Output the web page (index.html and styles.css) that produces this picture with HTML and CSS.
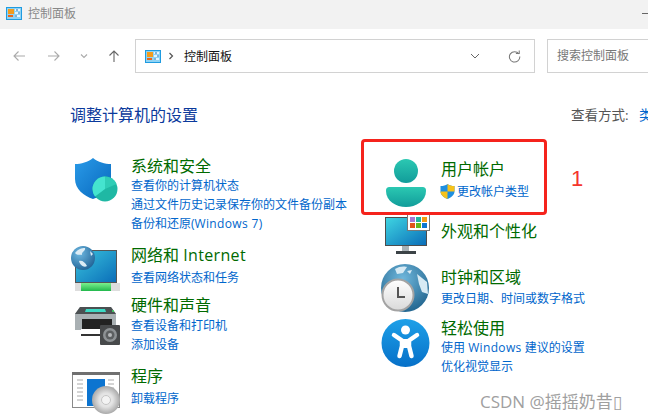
FILE: index.html
```html
<!DOCTYPE html>
<html lang="zh-CN">
<head>
  <meta charset="UTF-8">
  <title>控制面板</title>
  <link rel="stylesheet" href="styles.css">
</head>
<body>
  <div class="titlebar">
    <svg class="cp-icon" viewBox="0 0 16 13"><rect x=".5" y=".5" width="15" height="12" fill="#8fd3f4" stroke="#1f9be0"/><rect x="2" y="2" width="6" height="5" fill="#f29b1d"/><rect x="2" y="8" width="5" height="2" fill="#e8661a"/><path d="M9 3h5M9 6h5M9 9h5" stroke="#fff" stroke-width="1.4"/><path d="M11 2v2M13 5v2M10 8v2" stroke="#1c6fb5"/></svg>
    <span class="titlebar-text">控制面板</span>
    <span class="minimize"></span>
  </div>

  <div class="nav">
    <svg class="nav-btn back" viewBox="0 0 12 12"><path d="M12 6H1M5.500 1.500 1 6l4.500 4.500" fill="none" stroke="#aaa" stroke-width="1.100"/></svg>
    <svg class="nav-btn forward" viewBox="0 0 12 12"><path d="M0 6h11M6.500 1.500 11 6l-4.500 4.500" fill="none" stroke="#aaa" stroke-width="1.100"/></svg>
    <svg class="nav-btn down" viewBox="0 0 12 12"><path d="M3 4.500 6 7.500 9 4.500" fill="none" stroke="#aaa" stroke-width="1.100"/></svg>
    <svg class="nav-btn up" viewBox="0 0 12 12"><path d="M6 12V1M1.500 5.500 6 1l4.500 4.500" fill="none" stroke="#666" stroke-width="1.100"/></svg>
    <div class="address">
      <svg class="cp-icon" viewBox="0 0 16 13"><rect x=".5" y=".5" width="15" height="12" fill="#8fd3f4" stroke="#1f9be0"/><rect x="2" y="2" width="6" height="5" fill="#f29b1d"/><rect x="2" y="8" width="5" height="2" fill="#e8661a"/><path d="M9 3h5M9 6h5M9 9h5" stroke="#fff" stroke-width="1.4"/><path d="M11 2v2M13 5v2M10 8v2" stroke="#1c6fb5"/></svg>
      <svg class="crumb-arrow" viewBox="0 0 6 8"><path d="M1.500 1 4.500 4l-3 3" fill="none" stroke="#555" stroke-width="1.200"/></svg>
      <span class="crumb">控制面板</span>
      <svg class="addr-down" viewBox="0 0 10 6"><path d="M1 1l4 4 4-4" fill="none" stroke="#666"/></svg>
      <svg class="refresh" viewBox="0 0 14 14"><path d="M11.700 4.200A5.600 5.600 0 1 0 12.700 7" fill="none" stroke="#777" stroke-width="1.100"/><path d="M8.500 3.800h3.600V.5" fill="none" stroke="#777" stroke-width="1.100"/></svg>
    </div>
    <div class="search">搜索控制面板</div>
  </div>

  <div class="heading-row">
    <h1>调整计算机的设置</h1>
    <div class="view-by">查看方式: <a class="view-value">类别</a></div>
  </div>

  <div class="columns">
    <div class="column">
      <div class="item">
        <svg class="icon" viewBox="0 0 48 48">
          <defs><linearGradient id="sh" x1="0" y1="0" x2="1" y2="1"><stop offset="0" stop-color="#2a9be8"/><stop offset="1" stop-color="#0767bd"/></linearGradient></defs>
          <path d="M4 8C10 8 17 6 22 2 27 6 34 8 40 8V23C40 33 31 40 22 43 13 40 4 33 4 23Z" fill="url(#sh)"/>
          <circle cx="34" cy="33" r="12.500" fill="#1fb8a4"/>
          <path d="M34 33V20.500A12.500 12.500 0 0 1 45.500 28Z" fill="#2fcdb6"/>
          <path d="M34 33V20.500A12.500 12.500 0 0 0 21.500 33 12.500 12.500 0 0 0 24 40.500Z" fill="#45e4cf"/>
        </svg>
        <div class="text">
          <a class="title">系统和安全</a>
          <a class="link">查看你的计算机状态</a>
          <a class="link">通过文件历史记录保存你的文件备份副本</a>
          <a class="link">备份和还原(<span class="en">Windows 7</span>)</a>
        </div>
      </div>

      <div class="item">
        <svg class="icon" viewBox="0 0 48 48">
          <defs>
            <linearGradient id="scr" x1="0" y1="0" x2="1" y2="1"><stop offset="0" stop-color="#3ac4dd"/><stop offset="1" stop-color="#0a6db8"/></linearGradient>
            <linearGradient id="grn" x1="0" y1="0" x2="0" y2="1"><stop offset="0" stop-color="#7bf08d"/><stop offset="1" stop-color="#22b84c"/></linearGradient>
            <radialGradient id="gl" cx=".35" cy=".3" r=".8"><stop offset="0" stop-color="#6fb9e2"/><stop offset="1" stop-color="#1d5f92"/></radialGradient>
          </defs>
          <rect x="4.500" y="5.500" width="41" height="32" fill="url(#scr)" stroke="#555"/>
          <rect x="4" y="38" width="45" height="8" fill="#ddd"/>
          <rect x="10" y="38" width="30" height="8" fill="url(#grn)"/>
          <circle cx="12" cy="13" r="12" fill="url(#gl)"/>
          <path d="M4 8C7 4 11 3 14 3 15 6 10 7 11 10 8 9 7 11 4 8ZM8 16C11 15 14 17 16 21 13 23 9 20 8 16ZM19 6 22 9 20 11Z" fill="#dcecf5"/>
        </svg>
        <div class="text">
          <a class="title title-gap">网络和 <span class="en">Internet</span></a>
          <a class="link">查看网络状态和任务</a>
        </div>
      </div>

      <div class="item item-tight">
        <svg class="icon icon-low" viewBox="0 0 48 48">
          <path d="M4 12 9 5H40L45 12V28H4Z" fill="#a9b0b3"/>
          <path d="M9 5H40L45 12H4Z" fill="#4b5052"/>
          <path d="M15 7H34L35 10H14Z" fill="#3ddac4"/>
          <circle cx="42" cy="9" r="1" fill="#3fe06a"/>
          <rect x="11" y="17" width="30" height="10" fill="#222"/>
          <rect x="10" y="27" width="24" height="5" fill="#fff"/>
          <rect x="10" y="32" width="20" height="2" fill="#333"/>
          <rect x="29" y="23" width="20" height="20" rx="1" fill="#47494b"/>
          <circle cx="39" cy="33" r="7" fill="#8e9295"/>
          <circle cx="39" cy="33" r="4.500" fill="#5c5f61"/>
          <circle cx="39" cy="33" r="2" fill="#b5b8ba"/>
        </svg>
        <div class="text text-hardware">
          <a class="title">硬件和声音</a>
          <a class="link">查看设备和打印机</a>
          <a class="link">添加设备</a>
        </div>
      </div>

      <div class="item">
        <svg class="icon" viewBox="0 -1 48 48">
          <defs><radialGradient id="disc"><stop offset="0" stop-color="#f2f2f2"/><stop offset=".5" stop-color="#e2e2e2"/><stop offset="1" stop-color="#a9a9a9"/></radialGradient></defs>
          <rect x="1.500" y="5.500" width="47" height="35" fill="#fff" stroke="#8a8a8a"/>
          <rect x="1" y="5" width="48" height="3" fill="#707070"/>
          <path d="M6 13h6M6 17h6M6 21h6M6 25h6M6 29h6M6 33h6M37 13h6M37 17h6M37 21h6" stroke="#aaa"/>
          <rect x="16" y="12" width="18" height="27" fill="#0c74d0"/>
          <circle cx="35" cy="33" r="14" fill="url(#disc)"/>
          <circle cx="35" cy="33" r="4.500" fill="#f3f3f3" stroke="#c5c5c5"/>
        </svg>
        <div class="text">
          <a class="title title-gap">程序</a>
          <a class="link">卸载程序</a>
        </div>
      </div>
    </div>

    <div class="column column-right">
      <div class="item">
        <svg class="icon" viewBox="0 0 48 48">
          <defs><linearGradient id="usr" x1="0" y1="0" x2="0" y2="1"><stop offset="0" stop-color="#2bc8b2"/><stop offset="1" stop-color="#119c9a"/></linearGradient></defs>
          <circle cx="25" cy="12" r="12" fill="url(#usr)"/>
          <path d="M5 32C5 29 6 28 9 28H41C44 28 45 29 45 32 45 42 35 48 25 48 15 48 5 42 5 32Z" fill="url(#usr)"/>
        </svg>
        <div class="text">
          <a class="title title-gap">用户帐户</a>
          <a class="link link-shield">
            <svg class="uac" viewBox="0 0 15 15"><path d="M7.500 0C9.500 1.500 11.500 2 14.500 2V7.500C14.500 11 11 13.500 7.500 15 4 13.500.5 11 .5 7.500V2C3.500 2 5.500 1.500 7.500 0Z" fill="#1f8fe0"/><path d="M7.500 0C9.500 1.500 11.500 2 14.500 2V7.500H7.500ZM7.500 7.500V15C4 13.500.5 11 .5 7.500Z" fill="#f7c21a"/></svg>更改帐户类型</a>
        </div>
      </div>

      <div class="item item-appearance">
        <svg class="icon" viewBox="0 0 48 48">
          <defs><linearGradient id="mon" x1="0" y1="0" x2="1" y2="1"><stop offset="0" stop-color="#3fd6e2"/><stop offset="1" stop-color="#0a6cb8"/></linearGradient></defs>
          <rect x="4.500" y="3.500" width="41" height="28" fill="url(#mon)" stroke="#4d4d4d"/>
          <rect x="21" y="32" width="7" height="5" fill="#a9b2b7"/>
          <rect x="15" y="37" width="20" height="3" fill="#3c4347"/>
          <rect x="26.500" y=".5" width="22" height="16" fill="#fff" stroke="#777"/>
          <rect x="29" y="3" width="5" height="5" fill="#a678d6"/><rect x="35" y="3" width="5" height="5" fill="#1fb5a3"/><rect x="41" y="3" width="5" height="5" fill="#f39a14"/>
          <rect x="29" y="9" width="5" height="5" fill="#e2551a"/><rect x="35" y="9" width="5" height="5" fill="#63b81f"/><rect x="41" y="9" width="5" height="5" fill="#0c76d0"/>
        </svg>
        <div class="text text-appearance">
          <a class="title">外观和个性化</a>
        </div>
      </div>

      <div class="item item-clock">
        <svg class="icon" viewBox="0 0 48 48">
          <defs>
            <radialGradient id="gl2" cx=".45" cy=".3" r=".8"><stop offset="0" stop-color="#6fb7dc"/><stop offset="1" stop-color="#1a5c86"/></radialGradient>
            <linearGradient id="face" x1="0" y1="0" x2="0" y2="1"><stop offset="0" stop-color="#fff"/><stop offset="1" stop-color="#d9d9d9"/></linearGradient>
          </defs>
          <circle cx="24" cy="24" r="24" fill="url(#gl2)"/>
          <path d="M14 5C18 2 24 2 26 3L22 9 16 10ZM36 10 46 18 47 30 41 28 38 20ZM26 7 31 6 29 10Z" fill="#d7eaf4"/>
          <circle cx="17" cy="31" r="15.500" fill="url(#face)" stroke="#a3a3a3" stroke-width="2"/>
          <path d="M17 23V33H24" fill="none" stroke="#555" stroke-width="2"/>
        </svg>
        <div class="text text-clock">
          <a class="title">时钟和区域</a>
          <a class="link">更改日期、时间或数字格式</a>
        </div>
      </div>

      <div class="item item-access">
        <svg class="icon icon-access" viewBox="0 0 48 48">
          <defs><linearGradient id="acc" x1="0" y1="0" x2="0" y2="1"><stop offset="0" stop-color="#1ea0e8"/><stop offset="1" stop-color="#0670c8"/></linearGradient></defs>
          <circle cx="24.500" cy="24" r="24" fill="url(#acc)"/>
          <circle cx="24.500" cy="11" r="4.500" fill="#fff"/>
          <path d="M13 16 21 21.500V27L18.500 37M36 16 28 21.500V27L30.500 37" fill="none" stroke="#fff" stroke-width="4.500" stroke-linecap="round" stroke-linejoin="round"/>
          <rect x="20" y="20" width="9" height="9" fill="#fff"/>
        </svg>
        <div class="text text-access">
          <a class="title">轻松使用</a>
          <a class="link">使用 <span class="en">Windows</span> 建议的设置</a>
          <a class="link">优化视觉显示</a>
        </div>
      </div>
    </div>
  </div>

  <!-- annotation added on top of the screenshot -->
  <div class="red-box"></div>
  <div class="red-num">1</div>
  <div class="watermark">CSDN @摇摇奶昔▯</div>
</body>
</html>
```

FILE: styles.css
```css
html, body {
  height: 100%;
}

body {
  margin: 0;
  position: relative;
  overflow: hidden;
  background: #fff;
  font-family: "Open Sans", "Noto Sans CJK SC", sans-serif;
  font-size: 12px;
}

.titlebar {
  height: 29px;
  background: #f2f2f2;
  display: flex;
  align-items: center;
  padding-left: 6px;
  padding-bottom: 3px;
  box-sizing: border-box;
}

.cp-icon {
  width: 16px;
  height: 13px;
  flex: none;
}

.titlebar-text {
  margin-left: 6px;
  color: #888;
}

.minimize {
  margin-left: auto;
  width: 6px;
  border-top: 1px solid #666;
}

.nav {
  display: flex;
  align-items: center;
  padding: 10px 0 0 13px;
}

.nav-btn {
  width: 12px;
  height: 12px;
  flex: none;
}

.back {
  margin-right: 23px;
}

.forward,
.down {
  margin-right: 18px;
}

.up {
  margin-right: 15px;
}

.address {
  width: 400px;
  height: 34px;
  box-sizing: border-box;
  border: 1px solid #d2d2d2;
  display: flex;
  align-items: center;
  padding-left: 9px;
  flex: none;
}

.crumb-arrow {
  width: 6px;
  height: 8px;
  margin-left: 7px;
}

.crumb {
  margin-left: 10px;
  color: #111;
}

.addr-down {
  width: 10px;
  height: 6px;
  margin-left: auto;
}

.refresh {
  width: 13px;
  height: 13px;
  margin-left: 28px;
  margin-right: 13px;
}

.search {
  width: 110px;
  height: 34px;
  flex: none;
  box-sizing: border-box;
  margin-left: 12px;
  border: 1px solid #d2d2d2;
  padding-left: 9px;
  line-height: 32px;
  color: #777;
}

.heading-row {
  display: flex;
  justify-content: space-between;
  margin-top: 32px;
  padding-left: 70px;
}

h1 {
  margin: 0;
  font-size: 16px;
  font-weight: normal;
  line-height: 20px;
  color: #0b3a9c;
}

.view-by {
  position: relative;
  width: 77px;
  flex: none;
  font-size: 13.500px;
  line-height: 20px;
  color: #555;
  white-space: nowrap;
}

.view-value {
  color: #0066cc;
  margin-left: 7px;
}

.columns {
  display: flex;
  margin-top: 31px;
  padding-left: 71px;
}

.column {
  width: 310px;
  flex: none;
}

.column-right {
  padding-top: 3px;
}

.item {
  display: flex;
  gap: 12px;
  margin-bottom: 12px;
}

.item-tight {
  margin-top: -10px;
}

.item-appearance {
  margin-top: -5px;
  margin-bottom: 2px;
}

.item-clock {
  margin-bottom: 4px;
}

.icon {
  width: 48px;
  height: 48px;
  flex: none;
  overflow: visible;
}

.icon-low {
  margin-top: 7px;
}

.icon-access {
  margin-top: 3px;
}

.text-appearance {
  padding-top: 7px;
}

.text-clock {
  padding-top: 3px;
}

.text-access {
  padding-top: 2px;
}

.text-clock .title {
  margin-bottom: 2px;
}

.text-hardware .title {
  margin-bottom: 1px;
}

.title {
  display: block;
  font-size: 16px;
  line-height: 20px;
  color: #006a00;
  white-space: nowrap;
}

.title-gap {
  margin-bottom: 3px;
}

.en {
  letter-spacing: .35px;
}

.link {
  display: block;
  line-height: 19px;
  color: #0066cc;
  white-space: nowrap;
}

.link-shield {
  display: flex;
  align-items: center;
  margin-left: -1px;
}

.uac {
  width: 15px;
  height: 15px;
  margin-right: 2px;
}

.red-box {
  position: absolute;
  left: 361px;
  top: 139px;
  width: 186px;
  height: 76px;
  box-sizing: border-box;
  border: 3px solid #f5231c;
  border-radius: 4px;
}

.red-num {
  position: absolute;
  left: 571px;
  top: 166px;
  font-family: "Liberation Sans", sans-serif;
  font-size: 22px;
  line-height: 26px;
  color: #f5352c;
}

.watermark {
  position: absolute;
  left: 480px;
  top: 390px;
  font-size: 17px;
  line-height: 24px;
  color: #a0a0a0;
  white-space: nowrap;
}
```
